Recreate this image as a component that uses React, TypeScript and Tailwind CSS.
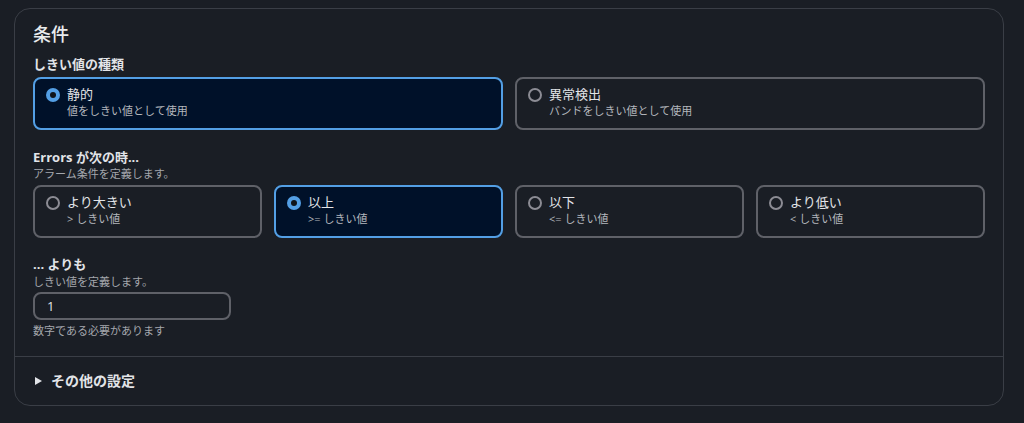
const font = { fontFamily: '"Open Sans", "Noto Sans CJK JP", sans-serif' };

type Opt = { label: string; desc: string; checked?: boolean };

const typeOptions: Opt[] = [
  { label: "静的", desc: "値をしきい値として使用", checked: true },
  { label: "異常検出", desc: "バンドをしきい値として使用" },
];

const condOptions: Opt[] = [
  { label: "より大きい", desc: "> しきい値" },
  { label: "以上", desc: ">= しきい値", checked: true },
  { label: "以下", desc: "<= しきい値" },
  { label: "より低い", desc: "< しきい値" },
];

const Radio = ({ checked }: { checked?: boolean }) =>
  checked ? (
    <span className="mt-[2px] flex h-[14px] w-[14px] shrink-0 items-center justify-center rounded-full bg-[#539fe5]">
      <span className="h-[6px] w-[6px] rounded-full bg-[#0f141a]" />
    </span>
  ) : (
    <span className="mt-[2px] h-[14px] w-[14px] shrink-0 rounded-full border-2 border-[#8c8c94]" />
  );

const Tile = ({ label, desc, checked }: Opt) => (
  <div
    className={
      checked
        ? "flex h-[53px] gap-[7px] rounded-lg border-2 border-[#539fe5] bg-[#001129] px-[11px] pt-[7px]"
        : "flex h-[53px] gap-[7px] rounded-lg border-2 border-[#5f6168] px-[11px] pt-[7px]"
    }
  >
    <Radio checked={checked} />
    <div>
      <div className="text-[13px] leading-[17px] text-[#e2e4e8]">{label}</div>
      <div className="text-[11px] leading-[15px] text-[#b4b7bd]">{desc}</div>
    </div>
  </div>
);

export default function App() {
  return (
    <div style={font} className="min-h-[423px] w-full bg-[#1a1e25] pl-[14px] pr-[20px] pt-2">
      <div className="rounded-2xl border border-[#3a3e46] bg-[#1a1e25]">
        <div className="px-[18px] pt-[14px] pb-[18px]">
          <h2 className="text-[18px] font-medium leading-[22px] text-[#e9ebed]">条件</h2>

          {/* threshold type */}
          <div className="mt-[10px] text-[13px] font-bold leading-[18px] text-[#e2e4e8]">しきい値の種類</div>
          <div className="mt-1 grid grid-cols-2 gap-3">
            {typeOptions.map((o) => (
              <Tile key={o.label} {...o} />
            ))}
          </div>

          {/* condition */}
          <div className="mt-[18px] text-[13px] font-bold leading-[18px] text-[#e2e4e8]">Errors が次の時...</div>
          <div className="text-[11px] leading-[15px] text-[#a4a7ad]">アラーム条件を定義します。</div>
          <div className="mt-1 grid grid-cols-4 gap-3">
            {condOptions.map((o) => (
              <Tile key={o.label} {...o} />
            ))}
          </div>

          {/* threshold value */}
          <div className="mt-[17px] text-[13px] font-bold leading-[18px] text-[#e2e4e8]">... よりも</div>
          <div className="mt-[1px] text-[11px] leading-[15px] text-[#a4a7ad]">しきい値を定義します。</div>
          <input
            defaultValue="1"
            className="mt-[3px] block h-[28px] w-[198px] rounded-lg border-2 border-[#5f6168] bg-transparent px-3 text-[13px] text-[#e2e4e8] outline-none"
          />
          <div className="mt-[3px] text-[11px] leading-[15px] text-[#a4a7ad]">数字である必要があります</div>
        </div>

        <div className="flex items-center gap-[9px] border-t border-[#3a3e46] px-5 pt-[14px] pb-[14px]">
          <svg width="7" height="8" viewBox="0 0 7 8" className="shrink-0">
            <path d="M0 0 L7 4 L0 8 Z" fill="#e2e4e8" />
          </svg>
          <span className="text-[14px] font-bold leading-5 text-[#e2e4e8]">その他の設定</span>
        </div>
      </div>
    </div>
  );
}
